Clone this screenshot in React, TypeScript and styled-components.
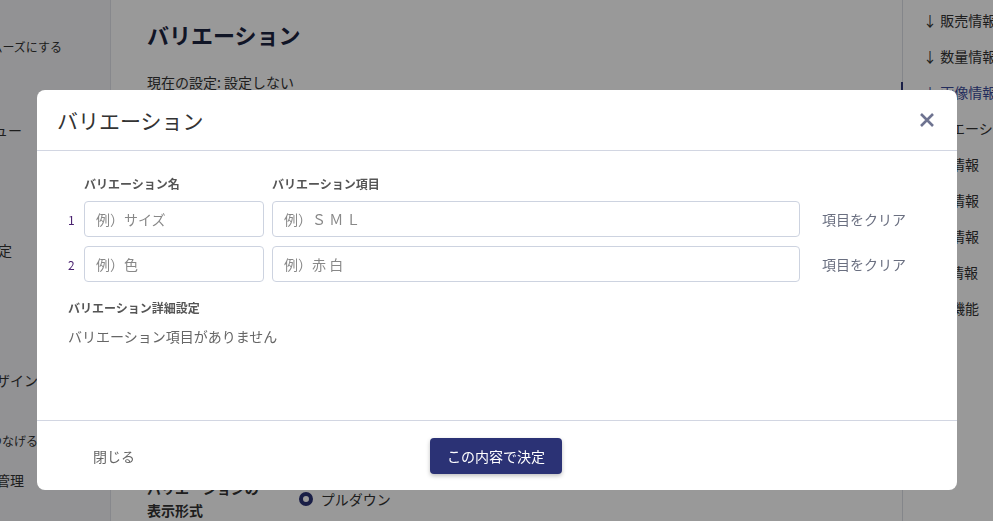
import React from "react";
import styled, { createGlobalStyle } from "styled-components";

const G = createGlobalStyle`
  html,body{margin:0;padding:0;}
  body{font-family:"Noto Sans CJK JP","Noto Sans",sans-serif;color:#333;background:#fff;}
`;
const Page = styled.div`display:flex;width:993px;height:521px;overflow:hidden;background:#fff;`;
const Side = styled.div`width:110px;flex:none;background:#f3f4f7;border-right:1px solid #e1e3ea;position:relative;overflow:hidden;`;
const SideItem = styled.div<{ $top: number; $pr: number; $small?: boolean }>`
  position:absolute;top:${p => p.$top}px;left:0;right:0;display:flex;justify-content:flex-end;
  padding-right:${p => p.$pr}px;white-space:nowrap;font-size:${p => (p.$small ? 12 : 14)}px;color:#333;`;
const Main = styled.div`flex:1;padding:18px 36px 0;display:flex;flex-direction:column;`;
const H1 = styled.h1`margin:0;font-size:22px;font-weight:700;color:#1c2340;`;
const Cur = styled.div`margin-top:22px;font-size:14px;`;
const Spacer = styled.div`flex:1;`;
const BottomRow = styled.div`display:flex;gap:40px;font-size:14px;font-weight:700;line-height:22px;margin-bottom:0;`;
const Radio = styled.span`font-weight:400;display:flex;align-items:center;gap:8px;`;
const Dot = styled.span`width:14px;height:14px;border-radius:50%;border:4px solid #2b3275;box-sizing:border-box;`;
const Nav = styled.div`width:90px;flex:none;border-left:1px solid #dcdfe6;padding-top:10px;display:flex;flex-direction:column;gap:16px;`;
const NavItem = styled.div<{ $on?: boolean }>`font-size:14px;white-space:nowrap;padding-left:20px;color:${p => (p.$on ? "#3a4a9a" : "#333")};
  border-left:2px solid ${p => (p.$on ? "#2c3577" : "transparent")};margin-left:-2px;`;
const Overlay = styled.div`position:fixed;inset:0;background:rgba(0,0,0,0.4);`;
const Modal = styled.div`position:fixed;left:37px;top:90px;width:920px;height:400px;background:#fff;border-radius:8px;display:flex;flex-direction:column;`;
const Head = styled.div`height:60px;border-bottom:1px solid #d2d6e2;display:flex;align-items:center;justify-content:space-between;padding:0 22px 0 20px;`;
const Title = styled.div`font-size:21px;color:#333;`;
const Close = styled.button`border:0;background:none;padding:0;display:flex;cursor:pointer;`;
const Body = styled.div`flex:1;padding:24px 31px;display:flex;flex-direction:column;`;
const Grid = styled.div`display:grid;grid-template-columns:8px 180px 528px auto;column-gap:8px;row-gap:9px;align-items:center;`;
const Label = styled.div`font-size:12px;font-weight:700;color:#555;`;
const Num = styled.div`font-size:12px;color:#4a2270;`;
const Input = styled.input`height:36px;box-sizing:border-box;border:1px solid #cdd3e0;border-radius:4px;padding:0 11px;font-size:14px;font-family:inherit;
  &::placeholder{color:#888;}`;
const Clear = styled.div`font-size:14px;color:#6a6f80;padding-left:14px;`;
const Detail = styled.div`margin-top:17px;font-size:12px;font-weight:700;color:#555;`;
const Empty = styled.div`margin-top:10px;font-size:14px;color:#666;`;
const Foot = styled.div`height:69px;border-top:1px solid #d2d6e2;display:flex;align-items:center;padding:0 0 0 56px;`;
const CloseText = styled.div`font-size:14px;color:#666;width:337px;`;
const Primary = styled.button`background:#2b3275;color:#fff;border:0;border-radius:4px;height:36px;padding:0 17px;font-size:14px;font-family:inherit;box-shadow:0 2px 4px rgba(0,0,0,0.25);`;

export default function App() {
  return (
    <>
      <G />
      <Page>
        <Side>
          <SideItem $top={38} $pr={48} $small>購入をスムーズにする</SideItem>
          <SideItem $top={120} $pr={88}>メニュー</SideItem>
          <SideItem $top={240} $pr={98}>設定</SideItem>
          <SideItem $top={370} $pr={72}>デザイン</SideItem>
          <SideItem $top={432} $pr={72} $small>SNSとつなげる</SideItem>
          <SideItem $top={470} $pr={86}>在庫管理</SideItem>
        </Side>
        <Main>
          <H1>バリエーション</H1>
          <Cur>現在の設定: 設定しない</Cur>
          <Spacer />
          <BottomRow>
            <span>バリエーションの<br />表示形式</span>
            <Radio><Dot />プルダウン</Radio>
          </BottomRow>
        </Main>
        <Nav>
          {["販売情報", "数量情報", "画像情報", "バリエーション", "表示情報", "詳細情報", "販促情報", "SEO情報", "追加機能"].map((t, i) => (
            <NavItem key={t} $on={i === 2}>{i < 3 ? "↓ " : ""}{t}</NavItem>
          ))}
        </Nav>
      </Page>
      <Overlay />
      <Modal>
        <Head>
          <Title>バリエーション</Title>
          <Close aria-label="close">
            <svg width="16" height="16" viewBox="0 0 16 16"><path d="M2 2L14 14M14 2L2 14" stroke="#6e7390" strokeWidth="2.6" /></svg>
          </Close>
        </Head>
        <Body>
          <Grid>
            <span />
            <Label>バリエーション名</Label>
            <Label>バリエーション項目</Label>
            <span />
            <Num>1</Num>
            <Input placeholder="例）サイズ" />
            <Input placeholder="例）Ｓ Ｍ Ｌ" />
            <Clear>項目をクリア</Clear>
            <Num>2</Num>
            <Input placeholder="例）色" />
            <Input placeholder="例）赤 白" />
            <Clear>項目をクリア</Clear>
          </Grid>
          <Detail>バリエーション詳細設定</Detail>
          <Empty>バリエーション項目がありません</Empty>
        </Body>
        <Foot>
          <CloseText>閉じる</CloseText>
          <Primary>この内容で決定</Primary>
        </Foot>
      </Modal>
    </>
  );
}
